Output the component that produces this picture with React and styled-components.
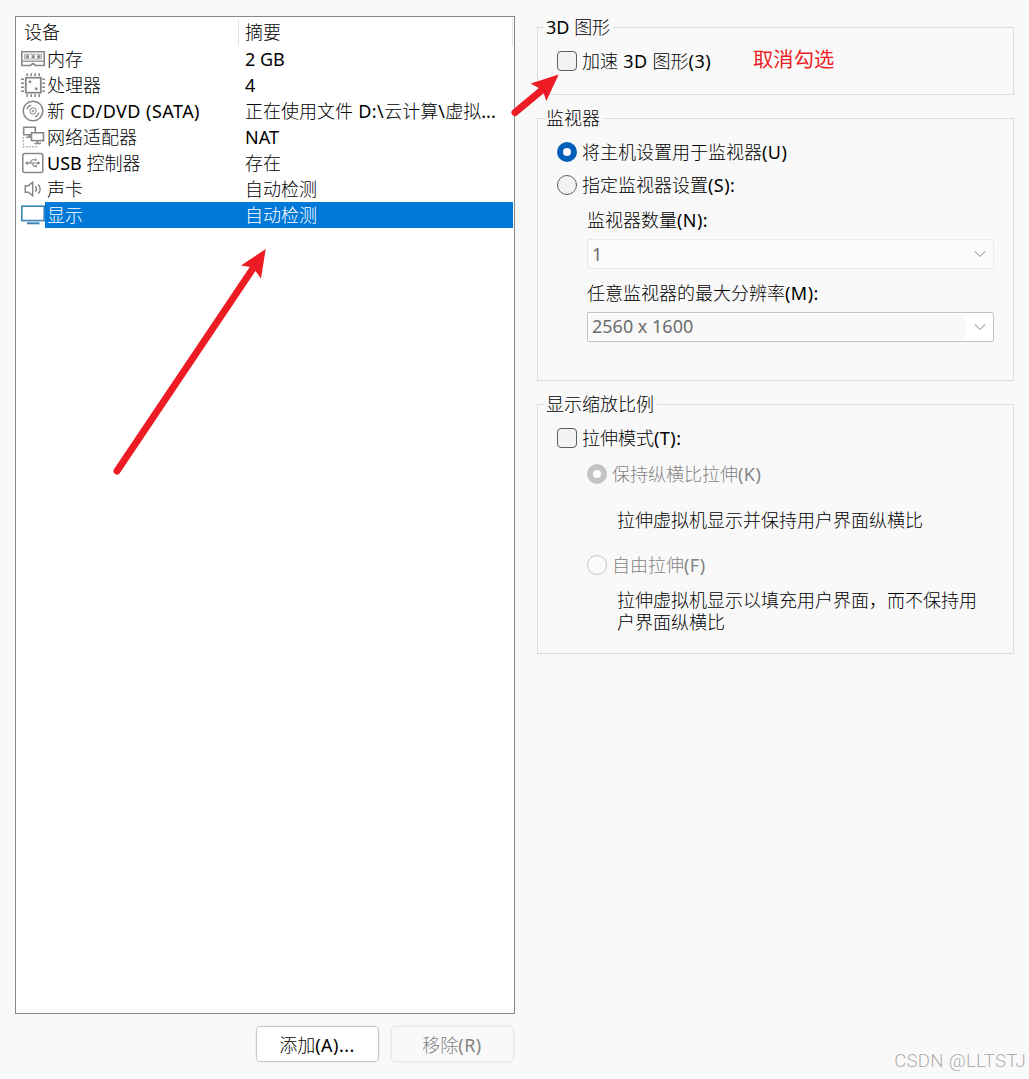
import React from "react";
import styled, { createGlobalStyle } from "styled-components";

const Global = createGlobalStyle`
  * { box-sizing: border-box; }
  body {
    margin: 0;
    background: #f9f9f9;
    color: #000;
    font: 300 18px/24px "Noto Sans CJK SC", sans-serif;
    overflow: hidden;
  }
`;

const Page = styled.div`
  position: relative;
  display: flex;
  gap: 22px;
  width: 1029px;
  height: 1079px;
  padding: 16px 15px 0;
`;

const Left = styled.section`
  width: 500px;
  display: flex;
  flex-direction: column;
`;

const DeviceList = styled.div`
  height: 998px;
  border: 1px solid #828790;
  background: #fff;
  padding: 2px 1px 0 0;
`;

const Header = styled.div`
  display: flex;
  height: 27px;
`;

const HeaderCell = styled.div`
  width: ${(p) => p.$w}px;
  height: 27px;
  padding-left: ${(p) => p.$pad}px;
  border-right: 1px solid #e5e5e5;
`;

const Row = styled.div`
  display: flex;
  height: 26px;
  padding-left: 5px;
`;

const RowBody = styled.div`
  display: flex;
  flex: 1;
  min-width: 0;
  background: ${(p) => (p.$selected ? "#0078d7" : "transparent")};
  color: ${(p) => (p.$selected ? "#fff" : "#000")};
`;

const Name = styled.div`
  width: 200px;
  padding-left: 2px;
  white-space: nowrap;
`;

const Icon = styled.svg`
  width: 24px;
  height: 26px;
  flex: none;
  fill: none;
  stroke: ${(p) => p.$color || "#85878a"};
  stroke-width: 1.6;
`;

const Latin = styled.span`
  font: 400 18px/20px "Noto Sans", sans-serif;
  letter-spacing: ${(p) => (p.$wide ? 0.45 : 0)}px;
  white-space: pre;
`;

const Buttons = styled.div`
  display: flex;
  justify-content: flex-end;
  gap: 12px;
  margin: 12px 1px 0 0;
`;

const Button = styled.button`
  width: 123px;
  height: 36px;
  padding: 0 1px 1px 0;
  border: 1px solid ${(p) => (p.disabled ? "#e8e8e8" : "#c8c8c8")};
  outline: 1px solid #f0f0f0;
  border-radius: 4px;
  background: ${(p) => (p.disabled ? "#f9f9f9" : "#fff")};
  color: ${(p) => (p.disabled ? "#838383" : "#000")};
  font: inherit;
`;

const Right = styled.section`
  width: 477px;
  padding-top: 11px;
`;

const Group = styled.div`
  height: ${(p) => p.$h}px;
  border: 1px solid #dcdcdc;
  margin-bottom: 23px;
`;

const Legend = styled.div`
  width: max-content;
  height: 26px;
  margin: -14px 0 0 6px;
  padding: 0 3px 0 2px;
  background: #f9f9f9;
`;

const Option = styled.label`
  display: flex;
  align-items: center;
  gap: 5px;
  height: 26px;
  margin: ${(p) => p.$top}px 0 0 ${(p) => p.$left}px;
  color: ${(p) => (p.$disabled ? "#838383" : "#000")};
`;

const OptionText = styled.span`
  padding-bottom: 2px;
`;

const Check = styled.span`
  width: 20px;
  height: 20px;
  border: 1px solid #5f5f5f;
  border-radius: 4px;
  background: #f3f3f3;
`;

const Radio = styled.span`
  width: 20px;
  height: 20px;
  border-radius: 50%;
  border: ${(p) => (p.$on ? 6 : 1)}px solid
    ${(p) => (p.$on ? (p.$disabled ? "#c3c3c3" : "#005fb8") : p.$disabled ? "#c5c5c5" : "#626262")};
  background: ${(p) => (p.$on ? "#fff" : p.$disabled ? "#fbfbfb" : "#f3f3f3")};
`;

const Label = styled.div`
  height: 26px;
  margin: ${(p) => p.$top}px 0 0 49px;
`;

const Combo = styled.div`
  display: flex;
  width: 407px;
  height: 30px;
  margin: ${(p) => p.$top}px 0 0 49px;
  padding: 2px;
  border: 1px solid ${(p) => (p.$edge ? "#c3c3c3" : "#e9e9e9")};
  border-radius: 2px;
  background: ${(p) => (p.$edge ? "#fff" : "#fbfbfb")};
  color: #6d6d6d;
`;

const ComboText = styled.div`
  width: 375px;
  padding-left: 2px;
  line-height: ${(p) => (p.$edge ? 21 : 23)}px;
  background: ${(p) => (p.$edge ? "#f9f9f9" : "transparent")};
`;

const Chevron = styled.svg`
  width: 12px;
  height: 24px;
  margin-left: 9px;
  fill: none;
  stroke: #b4b4b4;
  stroke-width: 1.2;
`;

const Note = styled.p`
  width: 370px;
  margin: ${(p) => p.$top}px 0 0 79px;
  line-height: 22px;
`;

const RedNote = styled.span`
  margin: 0 0 7px 37px;
  color: #ed1c24;
  font-size: 20.3px;
  font-weight: 400;
`;

const Arrows = styled.svg`
  position: absolute;
  inset: 0;
  pointer-events: none;
  fill: #ed1c24;
  stroke: #ed1c24;
`;

const Watermark = styled.div`
  position: absolute;
  right: 3px;
  bottom: 5px;
  color: #aeaeae;
  font: 300 18.6px/26px Roboto, "Liberation Sans", sans-serif;
  letter-spacing: 0.3px;
  text-shadow: -1px -1px 0 #fff;
  white-space: nowrap;
`;

// Latin runs use a different face from the Chinese text; runs with brackets or slashes are set looser.
function T({ children }) {
  return children
    .split(/([\x20-\x7e]+)/)
    .filter(Boolean)
    .map((part, i) =>
      /^[\x20-\x7e]/.test(part) ? (
        <Latin key={i} $wide={/[(\\/]|^ 3D/.test(part)}>{part}</Latin>
      ) : (
        part
      )
    );
}

const icons = {
  memory: (
    <Icon viewBox="0 0 24 26">
      <path d="M.8 5.8H23.2V19.5H14.7L12 17.5L9.3 19.5H.8Z" />
      <path d="M1 15.2H23" strokeWidth="1.2" />
      <path d="M3.5 8.3H20.5V13H3.5Z" strokeWidth=".7" />
      <path d="M4.8 9.2H8V12.2H4.8ZM10.5 9.2H13.7V12.2H10.5ZM16.2 9.2H19.4V12.2H16.2Z" fill="#85878a" stroke="none" />
    </Icon>
  ),
  cpu: (
    <Icon viewBox="0 0 24 26">
      <rect x="4.8" y="5.7" width="15" height="15" strokeWidth="1.8" />
      <path d="M6.2 1.2V4M10.2 1.2V4M14.2 1.2V4M18.2 1.2V4M6.2 22.3V25M10.2 22.3V25M14.2 22.3V25M18.2 22.3V25M0 7.2H3M0 11.2H3M0 15.2H3M0 19.2H3M21.3 7.2H24M21.3 11.2H24M21.3 15.2H24M21.3 19.2H24" />
      <path d="M7.8 9.7H10.2M14.1 16.7H16.5" strokeWidth="2.4" />
    </Icon>
  ),
  disc: (
    <Icon viewBox="0 0 24 26">
      <circle cx="12" cy="13" r="9.8" strokeWidth="1.5" />
      <circle cx="12" cy="13" r="3.2" strokeWidth="1" />
      <circle cx="12" cy="13" r="1" fill="#85878a" stroke="none" />
      <path d="M6 11.3C6.5 9.2 8 7.6 10.2 7.1M18 14.7C17.5 16.8 16 18.4 13.8 18.9" strokeWidth="1.2" />
    </Icon>
  ),
  network: (
    <Icon viewBox="0 0 24 26">
      <path d="M10 10.8H2.7V3.3H14.3V8.5" />
      <rect x="10.5" y="8.8" width="12" height="7.8" />
      <path d="M16.5 16.7V19.2M13.5 19.5H20M8.2 11V13M5.3 13.3H10" />
      <path d="M2.3 13.2V22.8H16" strokeWidth="1.2" strokeDasharray="1.4 1.7" />
    </Icon>
  ),
  usb: (
    <Icon viewBox="0 0 24 26">
      <rect x="1.8" y="3.5" width="20" height="19" rx="2" strokeWidth="1.5" />
      <path d="M6 13H18M8.5 13L11.2 9.8H13.5M10.5 13L13 16.2H15" strokeWidth="1.1" />
      <circle cx="6" cy="13" r=".8" />
      <path d="M13.7 9.8H15.5M14.3 16.2H16" strokeWidth="2" />
      <path d="M16.7 11.5L19 13L16.7 14.5Z" strokeWidth=".6" fill="#85878a" />
    </Icon>
  ),
  sound: (
    <Icon viewBox="0 0 24 26">
      <path d="M4.3 9.8H7.2L11.7 6.3V19.7L7.2 16.2H4.3Z" strokeWidth="1.5" />
      <path d="M14.4 10.3C15.8 12 15.8 14 14.4 15.7M17.2 8.4C19.8 11 19.8 15 17.2 17.6" strokeWidth="1.4" />
    </Icon>
  ),
  display: (
    <Icon viewBox="0 0 24 26" $color="#3c83b7">
      <rect x=".8" y="4.2" width="22.4" height="14.4" />
      <path d="M6 21.3H18.5" strokeWidth="2" />
    </Icon>
  ),
};

const devices = [
  ["memory", "内存", "2 GB"],
  ["cpu", "处理器", "4"],
  ["disc", "新 CD/DVD (SATA)", "正在使用文件 D:\\云计算\\虚拟..."],
  ["network", "网络适配器", "NAT"],
  ["usb", "USB 控制器", "存在"],
  ["sound", "声卡", "自动检测"],
  ["display", "显示", "自动检测"],
];

function Select({ value, top, edge }) {
  return (
    <Combo $top={top} $edge={edge}>
      <ComboText $edge={edge}><T>{value}</T></ComboText>
      <Chevron viewBox="0 0 12 24"><path d="M1 9.5L6 14.5L11 9.5" /></Chevron>
    </Combo>
  );
}

export default function App() {
  return (
    <>
      <Global />
      <Page>
        <Left>
          <DeviceList>
            <Header>
              <HeaderCell $w={223} $pad={8}>设备</HeaderCell>
              <HeaderCell $w={274} $pad={6}>摘要</HeaderCell>
            </Header>
            {devices.map(([icon, name, summary]) => (
              <Row key={icon}>
                {icons[icon]}
                <RowBody $selected={icon === "display"}>
                  <Name><T>{name}</T></Name>
                  <div><T>{summary}</T></div>
                </RowBody>
              </Row>
            ))}
          </DeviceList>
          <Buttons>
            <Button><T>添加(A)...</T></Button>
            <Button disabled><T>移除(R)</T></Button>
          </Buttons>
        </Left>
        <Right>
          <Group $h={68}>
            <Legend><T>3D 图形</T></Legend>
            <Option $top={8} $left={19}>
              <Check />
              <OptionText><T>加速 3D 图形(3)</T></OptionText>
              <RedNote>取消勾选</RedNote>
            </Option>
          </Group>
          <Group $h={263}>
            <Legend>监视器</Legend>
            <Option $top={8} $left={19}><Radio $on /><OptionText><T>将主机设置用于监视器(U)</T></OptionText></Option>
            <Option $top={7} $left={19}><Radio /><OptionText><T>指定监视器设置(S):</T></OptionText></Option>
            <Label $top={9}><T>监视器数量(N):</T></Label>
            <Select top={6} value="1" />
            <Label $top={11}><T>任意监视器的最大分辨率(M):</T></Label>
            <Select top={6} value="2560 x 1600" edge />
          </Group>
          <Group $h={250}>
            <Legend>显示缩放比例</Legend>
            <Option $top={8} $left={19}><Check /><OptionText><T>拉伸模式(T):</T></OptionText></Option>
            <Option $top={10} $left={49} $disabled><Radio $on $disabled /><OptionText><T>保持纵横比拉伸(K)</T></OptionText></Option>
            <Note $top={21}>拉伸虚拟机显示并保持用户界面纵横比</Note>
            <Option $top={22} $left={49} $disabled><Radio $disabled /><OptionText><T>自由拉伸(F)</T></OptionText></Option>
            <Note $top={10}>拉伸虚拟机显示以填充用户界面，而不保持用户界面纵横比</Note>
          </Group>
        </Right>
        <Arrows width="1029" height="1079">
          <path d="M117 471L254 267M515 112.5L542 90" strokeWidth="7" strokeLinecap="round" />
          <path d="M265.7 249L241 265.5L250.5 267L255.5 271L261 278.5ZM558.7 74.5L530.7 83.5L538.7 88L543.7 93.3L546.3 101Z" stroke="none" />
        </Arrows>
        <Watermark>CSDN @LLTSTJ</Watermark>
      </Page>
    </>
  );
}
